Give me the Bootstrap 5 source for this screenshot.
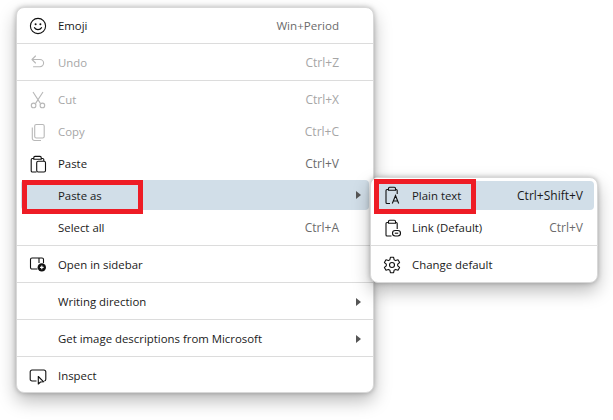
<!DOCTYPE html>
<html lang="en">
<head>
<meta charset="utf-8">
<title>Context menu</title>
<link href="https://cdn.jsdelivr.net/npm/bootstrap@5.3.0/dist/css/bootstrap.min.css" rel="stylesheet">
<style>
html, body { background: #fff; height: 100%; overflow: hidden; }
body { font-family: "Open Sans", "Noto Sans", sans-serif; font-size: 11.4px; color: #1a1a1a; }
.canvas { position: relative; width: 613px; height: 420px; padding: 7px 0 0 16px; }
.ctx-menu { position: static; display: block; width: 358px; min-width: 0; height: 386px; padding: 2px 4px 0; margin: 0; font-size: 11.4px; border: 1px solid #d8d8d8; border-radius: 8px; background: #fff; box-shadow: 0 8px 18px rgba(0,0,0,.27), 0 0 5px rgba(0,0,0,.25); }
.ctx-sub { position: absolute; left: 370px; top: 177px; width: 228px; height: 106px; padding: 3px 3px 0 4px; }
.ctx-menu li { list-style: none; }
.ctx-item { position: relative; height: 32px; padding: 0 30px 0 37px; display: flex; align-items: center; justify-content: space-between; color: #1a1a1a; border-radius: 4px; white-space: nowrap; }
.ctx-item.off, .ctx-item.off .ctx-key { color: #a6a6a6; }
.ctx-item.hot { background: #d1dee8; height: 30px; padding-top: 2px; margin-bottom: 2px; }
.ctx-sub .ctx-item { padding: 0 11px 0 37px; }
.ctx-sub .ctx-item.hot { height: 29px; padding-top: 1px; margin-bottom: 2px; }
.ctx-key { color: #6b6b6b; font-size: 12px; }
.ctx-key.slim { font-size: 11.6px; }
.hot .ctx-key { color: #1a1a1a; }
.ctx-ico { position: absolute; left: 7px; top: 6px; width: 20px; height: 20px; }
.ctx-sub .hot .ctx-ico { top: 4px; }
.ctx-arrow { position: absolute; right: 8px; top: 12px; width: 0; height: 0; border-left: 5.5px solid #555; border-top: 4px solid transparent; border-bottom: 4px solid transparent; }
.hot .ctx-arrow { top: 11px; }
.ctx-sep { height: 1px; margin: 1px -4px 3px; background: #dcdcdc; opacity: 1; border: 0; }
.ctx-flag { position: absolute; border: 5px solid #ee1c25; pointer-events: none; }
.flag-a { left: 1px; top: 0; width: 121px; height: 34px; }
.flag-b { left: -1px; top: -2px; width: 102px; height: 35px; }
</style>
</head>
<body>
<div class="canvas">
  <ul class="ctx-menu dropdown-menu show">
    <li class="ctx-item"><svg class="ctx-ico" viewBox="0 0 20 20" fill="none" stroke="#111" stroke-width="1.1"><circle cx="10" cy="10" r="7.6"/><circle cx="7.6" cy="8.2" r="1" fill="#111" stroke="none"/><circle cx="12.4" cy="8.2" r="1" fill="#111" stroke="none"/><path d="M6.4 11.6c1.7 2.7 5.500 2.7 7.200 0" stroke-linecap="round"/></svg><span>Emoji</span><span class="ctx-key slim">Win+Period</span></li>
    <li><hr class="ctx-sep"></li>
    <li class="ctx-item off"><svg class="ctx-ico" viewBox="0 0 20 20" fill="none" stroke="#b8b8b8" stroke-width="1.1"><path d="M7.5 3 4 6.5 7.5 10M4 6.5h8a3.6 3.6 0 0 1 0 7.2H5.5" stroke-linecap="round" stroke-linejoin="round"/></svg><span>Undo</span><span class="ctx-key">Ctrl+Z</span></li>
    <li><hr class="ctx-sep"></li>
    <li class="ctx-item off"><svg class="ctx-ico" viewBox="0 0 20 20" fill="none" stroke="#b8b8b8" stroke-width="1.1"><path d="M5 2 12.4 13.4M15 2 7.6 13.4"/><circle cx="5.6" cy="15.4" r="2.3"/><circle cx="14.4" cy="15.4" r="2.3"/></svg><span>Cut</span><span class="ctx-key">Ctrl+X</span></li>
    <li class="ctx-item off"><svg class="ctx-ico" viewBox="0 0 20 20" fill="none" stroke="#b8b8b8" stroke-width="1.1"><rect x="6.7" y="2.5" width="9.5" height="13.5" rx="1.6"/><path d="M4.3 5.5v10.8a2.2 2.2 0 0 0 2.2 2.2H13"/></svg><span>Copy</span><span class="ctx-key">Ctrl+C</span></li>
    <li class="ctx-item"><svg class="ctx-ico" viewBox="0 0 20 20" fill="none" stroke="#111" stroke-width="1.1"><path d="M5.8 4.5H4.4a1.2 1.2 0 0 0-1.2 1.2v11.1a1.2 1.2 0 0 0 1.2 1.2h4.1M13.2 4.5h1.400a1.2 1.2 0 0 1 1.2 1.2V7M5.8 5.2h7.400V3.6a1.2 1.2 0 0 0-1.2-1.2H7a1.2 1.2 0 0 0-1.2 1.2z"/><rect x="8.7" y="7.2" width="8.8" height="10.8" rx="1.5"/></svg><span>Paste</span><span class="ctx-key">Ctrl+V</span></li>
    <li class="ctx-item hot"><span>Paste as</span><i class="ctx-arrow"></i><i class="ctx-flag flag-a"></i></li>
    <li class="ctx-item"><span>Select all</span><span class="ctx-key">Ctrl+A</span></li>
    <li><hr class="ctx-sep"></li>
    <li class="ctx-item"><svg class="ctx-ico" viewBox="0 0 20 20" fill="none" stroke="#111" stroke-width="1.1"><path d="M9.5 14H4a1.5 1.5 0 0 1-1.5-1.5v-8A1.5 1.5 0 0 1 4 3h10a1.5 1.5 0 0 1 1.5 1.5V8M11 3v5"/><circle cx="13.8" cy="12.4" r="4.2" fill="#111" stroke="none"/><path d="M13.8 10.6v3.6M12 12.4h3.6" stroke="#fff"/></svg><span>Open in sidebar</span></li>
    <li><hr class="ctx-sep"></li>
    <li class="ctx-item"><span>Writing direction</span><i class="ctx-arrow"></i></li>
    <li><hr class="ctx-sep"></li>
    <li class="ctx-item"><span>Get image descriptions from Microsoft</span><i class="ctx-arrow"></i></li>
    <li><hr class="ctx-sep"></li>
    <li class="ctx-item"><svg class="ctx-ico" viewBox="0 0 20 20" fill="none" stroke="#111" stroke-width="1.1"><path d="M8.5 15H4a1.8 1.8 0 0 1-1.8-1.8V5.8A1.8 1.8 0 0 1 4 4h12a1.8 1.8 0 0 1 1.8 1.8v7.4a1.8 1.8 0 0 1-1.4 1.8"/><path d="M10.3 10.5v7.5l2.2-2 3.2-.2z" stroke-linejoin="round"/></svg><span>Inspect</span></li>
  </ul>
  <ul class="ctx-menu ctx-sub dropdown-menu show">
    <li class="ctx-item hot"><svg class="ctx-ico" viewBox="0 0 20 20" fill="none" stroke="#111" stroke-width="1.1"><path d="M6.5 4.5H5a1 1 0 0 0-1 1V17.5a1 1 0 0 0 1 1h3M13.5 4.5H14.2a1 1 0 0 1 1 1V9M6.5 5.2h7V3.5a1.2 1.2 0 0 0-1.2-1.2H7.7a1.2 1.2 0 0 0-1.2 1.2zM10.3 18.5l3.2-8 3.2 8M11.3 16h4.4"/></svg><span>Plain text</span><span class="ctx-key">Ctrl+Shift+V</span><i class="ctx-flag flag-b"></i></li>
    <li class="ctx-item"><svg class="ctx-ico" viewBox="0 0 20 20" fill="none" stroke="#111" stroke-width="1.1"><path d="M6.5 4.5H5a1 1 0 0 0-1 1V17a1 1 0 0 0 1 1h4.5M13.5 4.5h.7a1 1 0 0 1 1 1v5.5M6.5 5.2h7V3.5a1.2 1.2 0 0 0-1.2-1.2H7.7a1.2 1.2 0 0 0-1.2 1.2z"/><rect x="10.500" y="12.500" width="8" height="5.5" rx="2.7"/><path d="M12.8 15.2h3.4"/></svg><span>Link (Default)</span><span class="ctx-key">Ctrl+V</span></li>
    <li><hr class="ctx-sep"></li>
    <li class="ctx-item"><svg class="ctx-ico" viewBox="0 0 20 20" fill="none" stroke="#111" stroke-width="1.1"><path d="M8.4 2.3h3.2l.5 2.4 1.5.9 2.4-.8 1.6 2.8-1.9 1.6v1.6l1.9 1.6-1.6 2.8-2.4-.8-1.5.9-.5 2.4H8.4l-.5-2.4-1.5-.9-2.4.8-1.600-2.800 1.900-1.600V9.200L2.400 7.600 4 4.800l2.400.8 1.500-.9z" stroke-linejoin="round"/><circle cx="10" cy="10" r="2.5"/></svg><span>Change default</span></li>
  </ul>
</div>
<script src="https://cdn.jsdelivr.net/npm/bootstrap@5.3.0/dist/js/bootstrap.bundle.min.js"></script>
</body>
</html>
